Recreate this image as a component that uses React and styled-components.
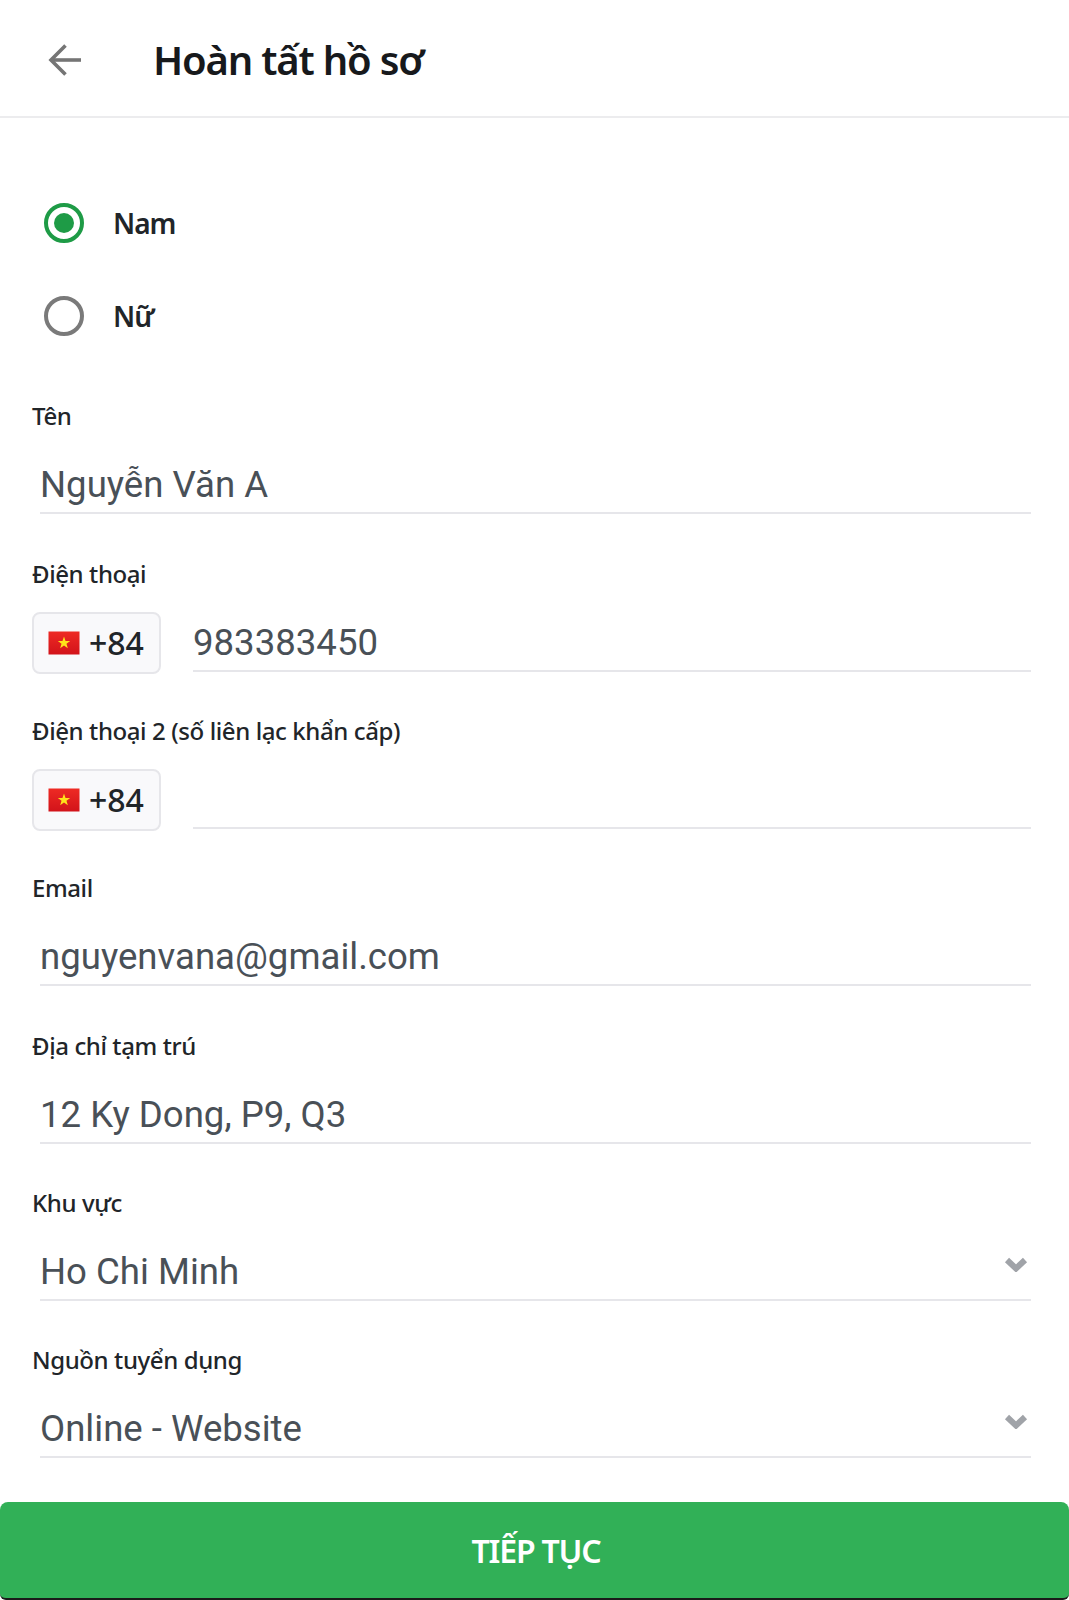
import styled, { createGlobalStyle } from 'styled-components'

const GlobalStyle = createGlobalStyle`
  html, body { margin: 0; padding: 0; background: #fff; }
  * { box-sizing: border-box; }
`

const Page = styled.div`
  display: flex;
  flex-direction: column;
  height: 1600px;
  background: #fff;
  font-family: "Noto Sans", "Open Sans", sans-serif;
  color: #212529;
`

const Header = styled.header`
  display: flex;
  align-items: center;
  height: 118px;
  padding: 0 0 0 47px;
  border-bottom: 2px solid #ececee;
`

const BackButton = styled.button`
  display: flex;
  width: 36px;
  height: 36px;
  margin: 4px 70px 0 0;
  padding: 0;
  border: 0;
  background: none;
`

const Title = styled.h1`
  margin: 3px 0 0;
  font-size: 40px;
  font-weight: 600;
  line-height: 50px;
  letter-spacing: -1.2px;
  color: #17191c;
`

const Form = styled.form`
  display: flex;
  flex-direction: column;
  flex: 1;
  margin: 0;
`

const RadioGroup = styled.div`
  display: flex;
  flex-direction: column;
  gap: 53px;
  padding: 85px 0 0 44px;
  margin-bottom: 23px;
`

const RadioRow = styled.label`
  display: flex;
  align-items: center;
  gap: 29px;
  height: 40px;
  font-size: 28px;
  font-weight: 600;
  letter-spacing: -1px;
`

const RadioCircle = styled.span`
  display: flex;
  align-items: center;
  justify-content: center;
  width: 40px;
  height: 40px;
  border-radius: 50%;
  border: 4px solid ${(p) => (p.$checked ? '#1e9b46' : '#7a7a7a')};

  &::after {
    content: '';
    display: ${(p) => (p.$checked ? 'block' : 'none')};
    width: 20px;
    height: 20px;
    border-radius: 50%;
    background: #1e9b46;
  }
`

const Field = styled.div`
  height: 157.33px;
  padding: 41.33px 38px 0 32px;
`

const Label = styled.div`
  height: 32px;
  margin-bottom: 22px;
  font-size: 24px;
  font-weight: 500;
  line-height: 31px;
  letter-spacing: -0.4px;
  color: #212529;
`

const Control = styled.div`
  display: flex;
  align-items: flex-start;
  gap: 32px;
  height: 62px;
  padding-left: ${(p) => (p.$inset ? '8px' : '0')};
`

const Value = styled.div`
  display: flex;
  flex: 1;
  justify-content: space-between;
  height: 60px;
  border-bottom: 2px solid #e6e6ea;
  font-family: Roboto, sans-serif;
  font-size: 36.6px;
  line-height: 62px;
  color: #495057;
`

const Chevron = styled.svg`
  flex: none;
  width: 24px;
  height: 16px;
  margin: 15px 3px 0 0;
`

const CountryButton = styled.button`
  display: flex;
  flex: none;
  align-items: center;
  gap: 9px;
  width: 129px;
  height: 62px;
  padding: 0 0 0 14px;
  border: 2px solid #e6e6ea;
  border-radius: 8px;
  background: #f9f9fb;
  font-family: "Noto Sans", sans-serif;
  font-size: 32px;
  font-weight: 500;
  color: #212529;
`

const SubmitButton = styled.button`
  margin: auto 0 0;
  height: 98px;
  padding: 0 0 0 3px;
  border: 0;
  border-radius: 8px 8px 6px 6px;
  border-bottom: 2px solid #1a1a1a;
  background: #31b057;
  font-family: "Noto Sans", sans-serif;
  font-size: 32px;
  font-weight: 600;
  letter-spacing: -1.2px;
  color: #fff;
`

const BackIcon = () => (
  <svg width="36" height="36" viewBox="0 0 36 36" fill="none" stroke="#757575" strokeWidth="3.6">
    <path d="M34 18H5" />
    <path d="M18.5 3.5L4 18l14.5 14.5" />
  </svg>
)

const Flag = () => (
  <svg width="32" height="24" viewBox="0 0 32 24">
    <defs>
      <linearGradient id="flag-red" x1="0" y1="0" x2="0" y2="1">
        <stop offset="0" stopColor="#ee2a24" />
        <stop offset="1" stopColor="#d2131a" />
      </linearGradient>
    </defs>
    <rect x="0.5" y="0.5" width="31" height="23" fill="url(#flag-red)" />
    <polygon
      points="16,5.5 17.53,9.9 22.18,9.99 18.47,12.8 19.82,17.26 16,14.6 12.18,17.26 13.53,12.8 9.82,9.99 14.47,9.9"
      fill="#ffe21a"
    />
  </svg>
)

const ChevronIcon = () => (
  <Chevron viewBox="0 0 24 16">
    <path d="M3 4l9 8.5L21 4" fill="none" stroke="#a0a3a8" strokeWidth="6" strokeLinejoin="miter" />
  </Chevron>
)

function TextField({ label, value, select }) {
  return (
    <Field>
      <Label>{label}</Label>
      <Control $inset>
        <Value>
          <span>{value}</span>
          {select && <ChevronIcon />}
        </Value>
      </Control>
    </Field>
  )
}

function PhoneField({ label, value }) {
  return (
    <Field>
      <Label>{label}</Label>
      <Control>
        <CountryButton type="button">
          <Flag />
          +84
        </CountryButton>
        <Value>{value}</Value>
      </Control>
    </Field>
  )
}

export default function App() {
  return (
    <>
      <GlobalStyle />
      <Page>
        <Header>
          <BackButton type="button" aria-label="Quay lại">
            <BackIcon />
          </BackButton>
          <Title>Hoàn tất hồ sơ</Title>
        </Header>
        <Form>
          <RadioGroup>
            <RadioRow>
              <RadioCircle $checked />
              Nam
            </RadioRow>
            <RadioRow>
              <RadioCircle />
              Nữ
            </RadioRow>
          </RadioGroup>
          <TextField label="Tên" value="Nguyễn Văn A" />
          <PhoneField label="Điện thoại" value="983383450" />
          <PhoneField label="Điện thoại 2 (số liên lạc khẩn cấp)" />
          <TextField label="Email" value="nguyenvana@gmail.com" />
          <TextField label="Địa chỉ tạm trú" value="12 Ky Dong, P9, Q3" />
          <TextField label="Khu vực" value="Ho Chi Minh" select />
          <TextField label="Nguồn tuyển dụng" value="Online - Website" select />
          <SubmitButton type="button">TIẾP TỤC</SubmitButton>
        </Form>
      </Page>
    </>
  )
}
